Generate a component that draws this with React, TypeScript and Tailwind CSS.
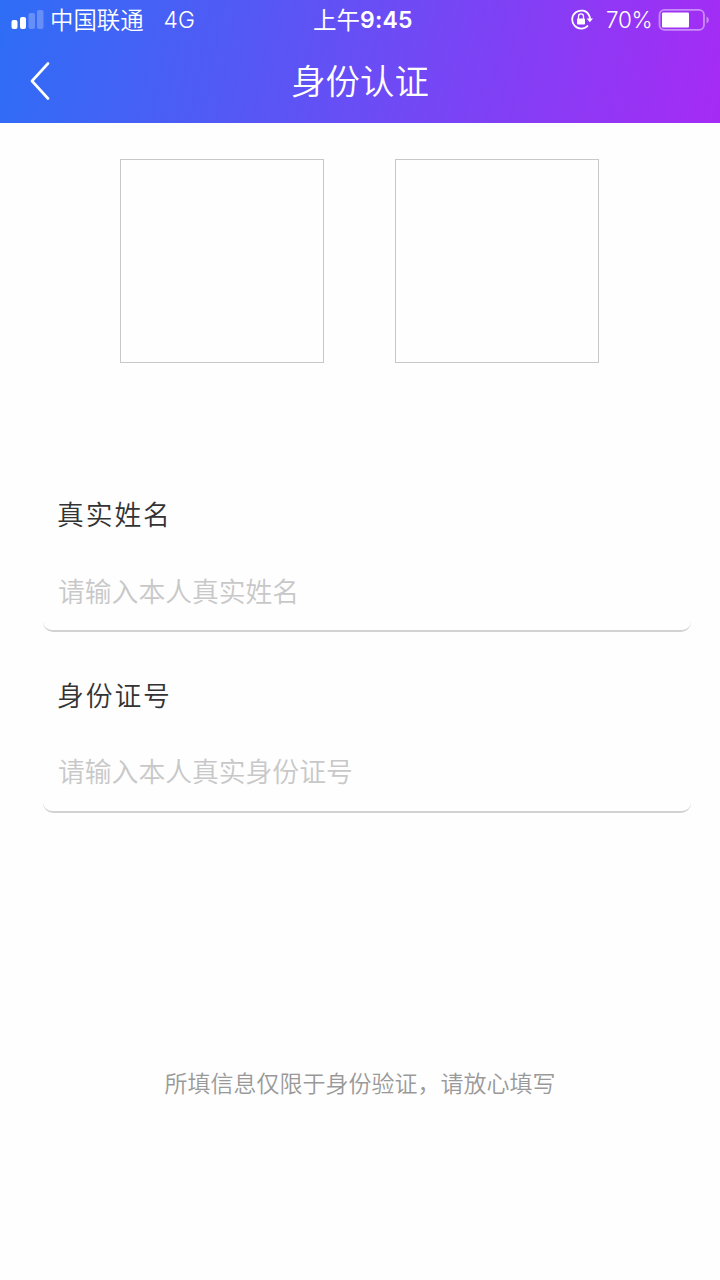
import React from "react";

const fields = [
  { name: "realName", label: "真实姓名", placeholder: "请输入本人真实姓名" },
  { name: "idNumber", label: "身份证号", placeholder: "请输入本人真实身份证号" },
];

const StatusBar: React.FC = () => {
  return (
    <div className="h-10 flex items-center text-[23px] leading-10">
      <div className="w-[313px] flex items-center pl-[11px]">
        <svg width="33" height="20" viewBox="0 0 33 20" fill="white">
          <rect x="0.5" y="10" width="6" height="9" rx="2" />
          <rect x="9" y="7" width="6" height="12" rx="2" />
          <rect x="17.5" y="3" width="6.5" height="16" rx="2" opacity="0.25" />
          <rect x="26" y="0" width="6.5" height="19" rx="2" opacity="0.25" />
        </svg>
        <span className="ml-[6px] pt-px text-[23.4px] font-[350]">中国联通</span>
        <span className="ml-5 text-[22.8px] font-[350]">4G</span>
      </div>
      <div className="w-[257px] flex">
        <span className="pt-px text-[23.5px]">上午</span>
        <span className="font-semibold text-[23px] tracking-[0.2px]">9:45</span>
      </div>
      <svg width="24" height="22" viewBox="0 0 24 22" fill="none">
        <path
          d="M19 6A9 9 0 1 0 18 16.5M18.6 5.5A9 9 0 0 1 20 11"
          stroke="white"
          strokeWidth="1.8"
        />
        <path d="M16.6 9.6H23L19.8 13.2Z" fill="white" />
        <rect x="7" y="9.5" width="8" height="6" rx="0.8" fill="white" />
        <path d="M8.5 10V7.4a2.5 2.5 0 0 1 5 0V10" stroke="white" strokeWidth="1.3" />
      </svg>
      <span className="ml-[12px] w-[52px] text-[22.5px] tracking-[-0.3px] font-[350]">70%</span>
      <svg width="52" height="22" viewBox="0 0 52 22" fill="none">
        <rect x="1.5" y="0.9" width="44.5" height="20" rx="5" stroke="white" strokeOpacity="0.45" strokeWidth="1.8" />
        <rect x="4" y="3.5" width="27" height="15" rx="1" fill="white" />
        <path d="M48.5 7.5c3 1.5 3 5.5 0 7Z" fill="white" fillOpacity="0.45" />
      </svg>
    </div>
  );
};

const Header: React.FC = () => {
  return (
    <header className="h-[123px] bg-[linear-gradient(100deg,#2e6df6_0%,#5558f5_35%,#7b43f5_65%,#a62bf4_100%)] text-white">
      <StatusBar />
      <div className="h-[82px] grid grid-cols-[120px_1fr_120px] items-center">
        <button className="pl-[30px]" aria-label="返回">
          <svg width="20" height="38" viewBox="0 0 20 38" fill="none">
            <path
              d="M18 1.5L2 19L18 36.5"
              stroke="white"
              strokeWidth="2.6"
              strokeLinecap="round"
              strokeLinejoin="round"
            />
          </svg>
        </button>
        <h1 className="pt-px text-center text-[34.4px] leading-[81px] font-[350]">身份认证</h1>
      </div>
    </header>
  );
};

const App: React.FC = () => {
  return (
    <div className="w-[720px] h-[1280px] overflow-hidden bg-[#fefefe] font-[Inter,'Noto_Sans_CJK_SC',sans-serif]">
      <Header />
      <div className="flex gap-[71px] pl-[120px] pt-9">
        <div className="size-[204px] border border-[#c8c8c8]" />
        <div className="size-[204px] border border-[#c8c8c8]" />
      </div>
      <form className="pt-[131px] pl-[43px] pr-[29px]">
        {fields.map((field) => (
          <div key={field.name} className="h-[180.5px]">
            <label
              htmlFor={field.name}
              className="block h-10 pl-[14px] text-[26.8px] leading-[42px] tracking-[1.9px] font-[350] text-[#333]"
            >
              {field.label}
            </label>
            <input
              id={field.name}
              placeholder={field.placeholder}
              className="block w-full h-[99px] mt-[-1px] pl-[15px] pt-5 rounded-[10px] border-b-2 border-[#d2d2d2] text-[26.8px] font-[350] outline-none placeholder:text-[#c8c8c8]"
            />
          </div>
        ))}
      </form>
      <p className="mt-[208px] text-center text-[23px] leading-[42px] font-[350] text-[#999]">
        所填信息仅限于身份验证，请放心填写
      </p>
    </div>
  );
};

export default App;
